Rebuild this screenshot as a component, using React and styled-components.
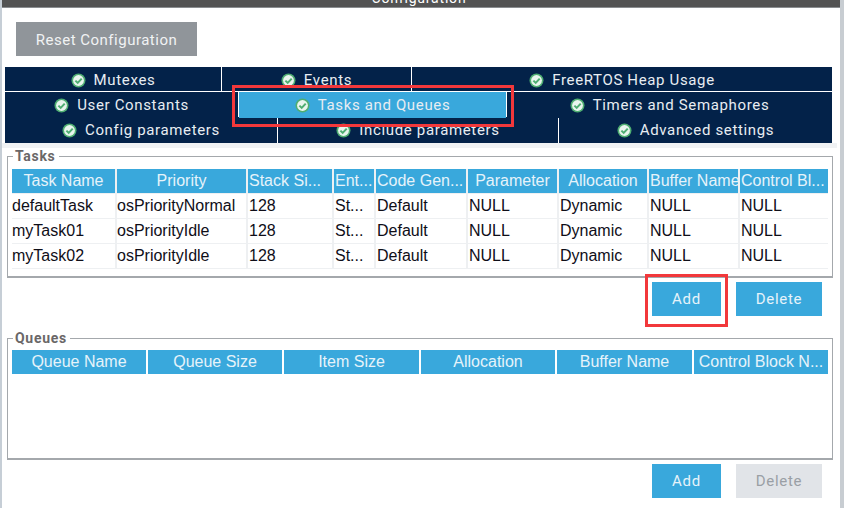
import React from 'react';
import styled, { createGlobalStyle } from 'styled-components';

const GlobalStyle = createGlobalStyle`
  html, body {
    margin: 0;
    padding: 0;
    background: #fff;
    overflow: hidden;
  }
`;

const Page = styled.div`
  position: relative;
  box-sizing: border-box;
  width: 844px;
  height: 508px;
  overflow: hidden;
  background: #fff;
  border-left: 2px solid #c6ced6;
  border-right: 4px solid #c8cdd2;
  font-family: "Liberation Sans", Arial, sans-serif;
`;

const TitleBar = styled.div`
  box-sizing: border-box;
  height: 8px;
  background: #535353;
  color: #fff;
  font-family: Roboto, sans-serif;
  font-size: 14px;
  letter-spacing: 0.8px;
  line-height: 8px;
  text-align: center;
  overflow: hidden;
  border-bottom: 1px solid #8a8d90;

  span {
    display: block;
    transform: translate(-2px, -6px);
  }
`;

const Toolbar = styled.div`
  padding: 14px 0 11px 14px;
`;

const ResetButton = styled.button`
  display: block;
  width: 181px;
  height: 34px;
  padding: 2px 0 0;
  border: none;
  background: #90959a;
  color: #f1f2f3;
  font-family: Roboto, sans-serif;
  font-size: 15px;
  letter-spacing: 0.5px;
`;

const TabArea = styled.div`
  display: flex;
  flex-direction: column;
  gap: 1px;
  margin: 0 6px 0 3px;
`;

const TabRow = styled.div`
  display: grid;
  grid-template-columns: ${(props) => props.$columns};
  gap: 1px;
  height: ${(props) => props.$height}px;
`;

const Tab = styled.div`
  display: flex;
  align-items: center;
  justify-content: center;
  gap: 8px;
  box-sizing: border-box;
  height: ${(props) => (props.$active ? '26px' : '100%')};
  padding-top: ${(props) => props.$nudge || 0}px;
  background: ${(props) => (props.$active ? '#39a8dc' : '#032249')};
  color: #e8edf2;
  font-family: Roboto, sans-serif;
  font-size: 15px;
  letter-spacing: 0.65px;
  white-space: nowrap;
  z-index: ${(props) => (props.$active ? 1 : 0)};
`;

const Band = styled.div`
  height: 5px;
  background: #f0f2f4;
  margin-right: 3px;
  margin-bottom: 1px;
`;

const Group = styled.fieldset`
  box-sizing: border-box;
  margin: ${(props) => props.$top}px 7px 0 5px;
  padding: 0 4px;
  height: ${(props) => props.$height}px;
  border: 1px solid #a4a8ac;
  border-width: 1px 1px 2px 1px;
  min-width: 0;
`;

const GroupLegend = styled.legend`
  margin-left: 1px;
  padding: 0 3px 0 2px;
  color: #6a6768;
  font-family: Roboto, sans-serif;
  font-size: 14px;
  font-weight: 700;
  letter-spacing: 0.7px;
  line-height: 12px;
`;

const Grid = styled.div`
  display: grid;
  grid-template-columns: ${(props) => props.$columns};
  column-gap: 2px;
  row-gap: 1px;
  margin-top: ${(props) => props.$top}px;
  padding-bottom: 1px;
  background: ${(props) => (props.$rows ? '#eef0f2' : 'transparent')};
`;

const HeadCell = styled.div`
  height: 24px;
  line-height: 24px;
  background: #39a8dc;
  color: #e6f3fa;
  font-size: 16px;
  text-align: ${(props) => (props.$left ? 'left' : 'center')};
  padding-left: ${(props) => (props.$left ? '1px' : '0')};
  white-space: nowrap;
  overflow: hidden;
`;

const Cell = styled.div`
  height: 24px;
  line-height: 24px;
  background: #fff;
  color: #0f0e18;
  font-size: 16px;
  padding-left: ${(props) => (props.$inset ? '1px' : '0')};
  white-space: nowrap;
  overflow: hidden;
`;

const ActionRow = styled.div`
  display: flex;
  justify-content: flex-end;
  gap: 15px;
  margin-top: ${(props) => props.$top}px;
  padding-right: 18px;
`;

const ActionButton = styled.button`
  width: ${(props) => props.$width}px;
  height: 34px;
  padding: 0;
  border: none;
  background: ${(props) => (props.$disabled ? '#e1e4e8' : '#39a8dc')};
  color: ${(props) => (props.$disabled ? '#9a9fa5' : '#e6f3fa')};
  font-family: Roboto, sans-serif;
  font-size: 15px;
  letter-spacing: 0.7px;
`;

const Callout = styled.div`
  position: absolute;
  box-sizing: border-box;
  left: ${(props) => props.$left}px;
  top: ${(props) => props.$top}px;
  width: ${(props) => props.$width}px;
  height: ${(props) => props.$height}px;
  border: 3px solid #f2383b;
  z-index: 2;
`;

const CheckIcon = () => (
  <svg width="15" height="15" viewBox="0 0 15 15">
    <circle cx="7.5" cy="7.5" r="7" fill="#4fae72" />
    <circle cx="7.5" cy="7.5" r="5.4" fill="#e9f5ee" />
    <path d="M4.4 7.6 L6.7 9.9 L10.7 5.6" fill="none" stroke="#4fae72" strokeWidth="2" />
  </svg>
);

const tabRows = [
  {
    columns: '216px 189px 420px',
    height: 24,
    nudge: 2,
    tabs: ['Mutexes', 'Events', 'FreeRTOS Heap Usage'],
  },
  {
    columns: '233px 267px 325px',
    height: 24,
    tabs: ['User Constants', 'Tasks and Queues', 'Timers and Semaphores'],
    active: 1,
  },
  {
    columns: '272px 280px 273px',
    height: 26,
    tabs: ['Config parameters', 'Include parameters', 'Advanced settings'],
  },
];

const taskColumns = '103px 129px 84px 40px 90px 89px 88px 89px 88px';
const taskHeads = [
  'Task Name',
  'Priority',
  'Stack Si...',
  'Ent...',
  'Code Gen...',
  'Parameter',
  'Allocation',
  'Buffer Name',
  'Control Bl...',
];
const leftHeads = ['Stack Si...', 'Ent...', 'Code Gen...', 'Buffer Name', 'Control Bl...'];
const tasks = [
  ['defaultTask', 'osPriorityNormal'],
  ['myTask01', 'osPriorityIdle'],
  ['myTask02', 'osPriorityIdle'],
];

const queueColumns = '134px 134px 135px 134px 135px 134px';
const queueHeads = ['Queue Name', 'Queue Size', 'Item Size', 'Allocation', 'Buffer Name', 'Control Block N...'];

export default function App() {
  return (
    <Page>
      <GlobalStyle />
      <TitleBar>
        <span>Configuration</span>
      </TitleBar>
      <Toolbar>
        <ResetButton>Reset Configuration</ResetButton>
      </Toolbar>
      <TabArea>
        {tabRows.map((row) => (
          <TabRow key={row.tabs[0]} $columns={row.columns} $height={row.height}>
            {row.tabs.map((tab, i) => (
              <Tab key={tab} $active={row.active === i} $nudge={row.nudge}>
                <CheckIcon />
                {tab}
              </Tab>
            ))}
          </TabRow>
        ))}
      </TabArea>
      <Band />
      <Group $top={2} $height={128}>
        <GroupLegend>Tasks</GroupLegend>
        <Grid $columns={taskColumns} $top={7} $rows>
          {taskHeads.map((head) => (
            <HeadCell key={head} $left={leftHeads.includes(head)}>
              {head}
            </HeadCell>
          ))}
          {tasks.map(([name, priority]) => (
            <React.Fragment key={name}>
              <Cell>{name}</Cell>
              <Cell>{priority}</Cell>
              <Cell $inset>128</Cell>
              <Cell $inset>St...</Cell>
              <Cell $inset>Default</Cell>
              <Cell $inset>NULL</Cell>
              <Cell $inset>Dynamic</Cell>
              <Cell $inset>NULL</Cell>
              <Cell $inset>NULL</Cell>
            </React.Fragment>
          ))}
        </Grid>
      </Group>
      <ActionRow $top={4}>
        <ActionButton $width={69}>Add</ActionButton>
        <ActionButton $width={86}>Delete</ActionButton>
      </ActionRow>
      <Group $top={16} $height={128}>
        <GroupLegend>Queues</GroupLegend>
        <Grid $columns={queueColumns} $top={6}>
          {queueHeads.map((head) => (
            <HeadCell key={head}>{head}</HeadCell>
          ))}
        </Grid>
      </Group>
      <ActionRow $top={4}>
        <ActionButton $width={69}>Add</ActionButton>
        <ActionButton $width={86} $disabled>
          Delete
        </ActionButton>
      </ActionRow>
      <Callout $left={230} $top={85} $width={282} $height={42} />
      <Callout $left={643} $top={274} $width={83} $height={53} />
    </Page>
  );
}
